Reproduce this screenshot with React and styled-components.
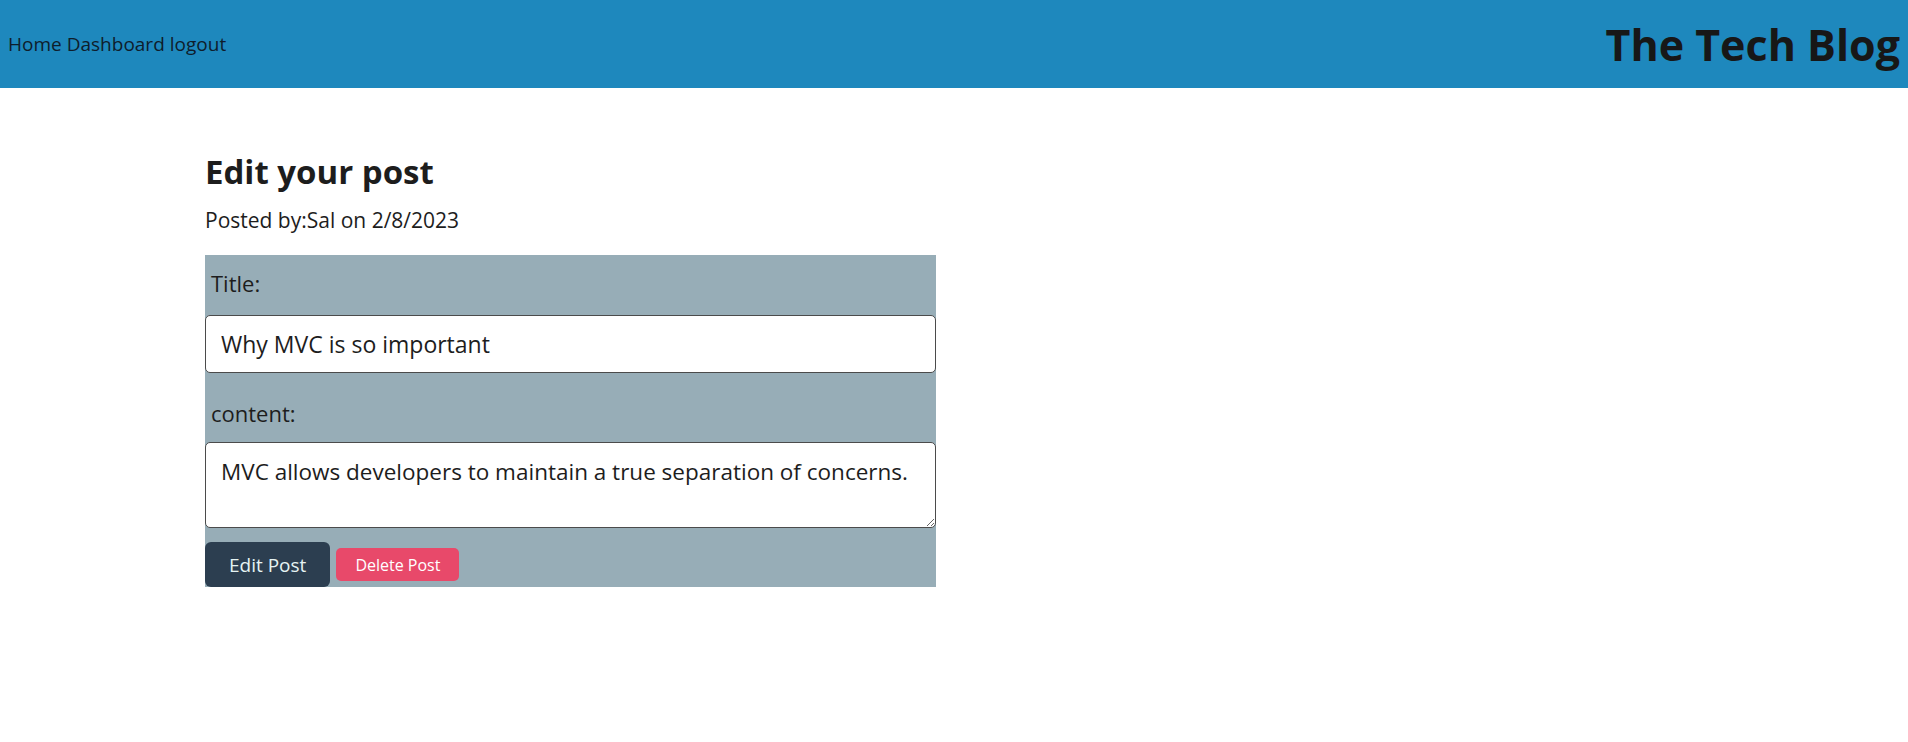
import React from 'react';
import styled, { createGlobalStyle } from 'styled-components';

const GlobalStyle = createGlobalStyle`
  body {
    margin: 0;
    font-family: "Open Sans", "Noto Sans", sans-serif;
    color: #1d1d1d;
    background: #ffffff;
  }
`;

const Header = styled.header`
  display: flex;
  justify-content: space-between;
  align-items: center;
  height: 88px;
  padding: 0 8px;
  background-color: #1e88bd;
`;

const Nav = styled.nav`
  font-size: 19px;
  color: #0e1d2c;
`;

const NavLink = styled.a`
  color: inherit;
  text-decoration: none;
  margin-right: 5px;
`;

const Brand = styled.h1`
  margin: 0;
  font-size: 43px;
  font-weight: 700;
  color: #171717;
`;

const Main = styled.main`
  padding: 63px 0 0 205px;
`;

const Heading = styled.h2`
  margin: 0;
  font-size: 33px;
  font-weight: 700;
  line-height: 1.3;
`;

const Meta = styled.p`
  margin: 13px 0 0;
  font-size: 21px;
  line-height: 1.3;
`;

const EditForm = styled.form`
  width: 731px;
  margin-top: 21px;
  background-color: #97adb7;
`;

const Label = styled.label`
  display: block;
  padding: ${(p) => p.$top}px 6px ${(p) => p.$bottom}px;
  font-size: 22px;
  line-height: 1.3;
`;

const Field = styled.input`
  display: block;
  box-sizing: border-box;
  width: 100%;
  height: 58px;
  margin: 0;
  padding: 0 15px;
  border: 1px solid #4b4b4b;
  border-radius: 5px;
  font-family: inherit;
  font-size: 23px;
  color: #1d1d1d;
  background: #ffffff;
`;

const Area = styled.textarea`
  display: block;
  box-sizing: border-box;
  width: 100%;
  height: 86px;
  margin: 0;
  padding: 14px 6px 6px 15px;
  border: 1px solid #4b4b4b;
  border-radius: 5px;
  font-family: inherit;
  font-size: 22.5px;
  line-height: 1.3;
  color: #1d1d1d;
  background: #ffffff;
  resize: vertical;
`;

const Actions = styled.div`
  display: flex;
  align-items: center;
  gap: 6px;
  margin-top: 14px;
`;

const Button = styled.button`
  box-sizing: border-box;
  height: ${(p) => (p.$danger ? 33 : 45)}px;
  padding: 0 ${(p) => (p.$danger ? 19 : 24)}px;
  border: none;
  border-radius: ${(p) => (p.$danger ? 5 : 6)}px;
  font-family: inherit;
  font-size: ${(p) => (p.$danger ? 16 : 19)}px;
  color: ${(p) => (p.$danger ? '#ffffff' : '#e6f3f3')};
  background-color: ${(p) => (p.$danger ? '#e8496a' : '#2c3e50')};
  cursor: pointer;
`;

export default function App() {
  return (
    <>
      <GlobalStyle />
      <Header>
        <Nav>
          <NavLink href="#">Home</NavLink>
          <NavLink href="#">Dashboard</NavLink>
          <NavLink href="#">logout</NavLink>
        </Nav>
        <Brand>The Tech Blog</Brand>
      </Header>
      <Main>
        <Heading>Edit your post</Heading>
        <Meta>Posted by:Sal on 2/8/2023</Meta>
        <EditForm onSubmit={(e) => e.preventDefault()}>
          <Label htmlFor="post-title" $top={14} $bottom={17}>Title:</Label>
          <Field id="post-title" defaultValue="Why MVC is so important" />
          <Label htmlFor="post-content" $top={26} $bottom={15}>content:</Label>
          <Area
            id="post-content"
            defaultValue="MVC allows developers to maintain a true separation of concerns."
          />
          <Actions>
            <Button type="submit">Edit Post</Button>
            <Button type="button" $danger>Delete Post</Button>
          </Actions>
        </EditForm>
      </Main>
    </>
  );
}
